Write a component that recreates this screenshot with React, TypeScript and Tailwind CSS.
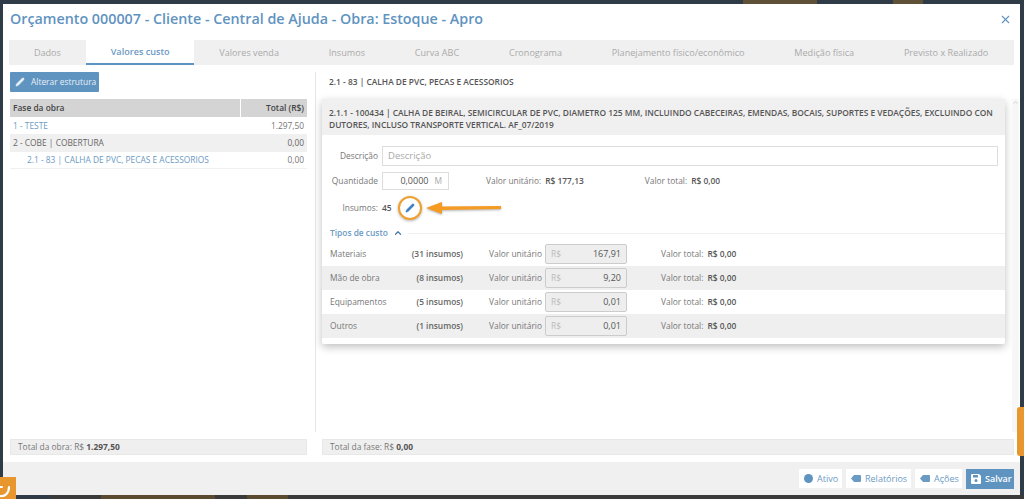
import { ChevronUp, Pencil, X } from 'lucide-react';

const tabs = ['Dados', 'Valores custo', 'Valores venda', 'Insumos', 'Curva ABC', 'Cronograma', 'Planejamento físico/econômico', 'Medição física', 'Previsto x Realizado'];

const costTypes = [
  { name: 'Materiais', count: '(31 insumos)', value: '167,91', shaded: false },
  { name: 'Mão de obra', count: '(8 insumos)', value: '9,20', shaded: true },
  { name: 'Equipamentos', count: '(5 insumos)', value: '0,01', shaded: false },
  { name: 'Outros', count: '(1 insumos)', value: '0,01', shaded: true },
];

function CostRow({ name, count, value, shaded }: Readonly<(typeof costTypes)[number]>) {
  return (
    <div className={`flex h-6 items-center pl-[8px] ${shaded ? 'bg-[#efefef]' : 'bg-white'}`}>
      <span className="w-[60px] text-[#777]">{name}</span>
      <span className="w-[73px] text-right font-semibold text-[#666]">{count}</span>
      <span className="ml-[26px] w-[56px] text-[#777]">Valor unitário</span>
      <div className="flex h-[20px] w-[82px] items-center justify-between rounded-[2px] border border-[#ccc] bg-[#eee] px-[5px]">
        <span className="text-[#bbb]">R$</span>
        <span className="text-[9px] text-[#555]">{value}</span>
      </div>
      <span className="ml-[34px] text-[#777]">Valor total:</span>
      <span className="ml-[4px] font-semibold text-[#555]">R$ 0,00</span>
    </div>
  );
}

function TagIcon() {
  return (
    <svg width="10" height="7" viewBox="0 0 10 7" fill="currentColor">
      <path d="M3 0H9a1 1 0 0 1 1 1V6a1 1 0 0 1-1 1H3L0 3.5Z" />
    </svg>
  );
}

function SaveIcon() {
  return (
    <svg width="10" height="10" viewBox="0 0 10 10">
      <path d="M1 0H8L10 2V9a1 1 0 0 1-1 1H1a1 1 0 0 1-1-1V1a1 1 0 0 1 1-1Z" fill="white" />
      <rect x="2" y="1" width="5" height="2.5" fill="#5f93c0" />
      <circle cx="5" cy="6.5" r="1.5" fill="#5f93c0" />
    </svg>
  );
}

export default function App() {
  return (
    <div className="relative h-[499px] w-[1024px] overflow-hidden bg-[#2f3b46] pb-[4px] pl-[3px] pr-[4px] pt-[4px] font-['Open_Sans',sans-serif] text-[8.4px] leading-[12px]">
      {/* what shows of the page behind the modal */}
      <div className="absolute left-[743px] top-0 h-[4px] w-[74px] bg-[#5f5038]" />
      <div className="absolute left-[893px] top-0 h-[4px] w-[30px] bg-[#5f5038]" />
      <div className="absolute bottom-0 left-[50px] h-[4px] w-[974px] bg-[#3a3a3a]" />
      <div className="absolute bottom-0 left-[101px] h-[4px] w-[114px] bg-[#5a4a30]" />
      <div className="absolute bottom-0 left-[247px] h-[4px] w-[41px] bg-[#5a4a30]" />

      <div className="relative flex h-full flex-col bg-white">
        <div className="flex h-[36px] shrink-0 items-start justify-between pl-[7px] pr-[8px] pt-[4px]">
          <h1 className="whitespace-nowrap text-[14.3px] font-semibold leading-[22px] text-[#5f93c0]">Orçamento 000007 - Cliente - Central de Ajuda - Obra: Estoque - Apro</h1>
          <X size={13} strokeWidth={2} className="mt-[5px] text-[#5f93c0]" />
        </div>

        <div className="ml-[6px] mr-[6px] flex h-[25px] shrink-0 bg-[#f0f0f0] text-[9.1px]">
          {tabs.map((tab, i) => (
            <div
              key={tab}
              className={`flex items-center whitespace-nowrap px-[24.9px] ${i === 1 ? 'border-b-[2px] border-[#5f93c0] bg-white font-semibold text-[#6b9ac4]' : 'text-[#aaa]'}`}
            >
              {tab}
            </div>
          ))}
        </div>

        <div className="flex min-h-0 flex-1 pt-[7px]">
          <div className="ml-[7px] flex w-[297px] shrink-0 flex-col">
            <button className="flex h-[20px] w-[89px] items-center gap-[6px] whitespace-nowrap rounded-[1px] bg-[#5f93c0] pl-[5px] text-[#e8f0f7]">
              <Pencil size={10} fill="currentColor" strokeWidth={1} />
              Alterar estrutura
            </button>
            <div className="mt-[7px] flex h-[18px] items-center bg-[#d4d4d4] font-semibold text-[#444]">
              <span className="w-[231px] border-r border-white pl-[3px] leading-[18px]">Fase da obra</span>
              <span className="flex-1 pr-[3px] text-right">Total (R$)</span>
            </div>
            <div className="flex h-[17px] items-center text-[#777]">
              <span className="flex-1 pl-[3px] text-[#6b9ac4]">1 - TESTE</span>
              <span className="pr-[3px]">1.297,50</span>
            </div>
            <div className="flex h-[18px] items-center bg-[#f0f0f0] text-[#666]">
              <span className="flex-1 pl-[3px]">2 - COBE | COBERTURA</span>
              <span className="pr-[3px]">0,00</span>
            </div>
            <div className="flex h-[17px] items-center border-b border-[#f0f0f0] text-[#777]">
              <span className="flex-1 pl-[17px] text-[#6b9ac4]">2.1 - 83 | CALHA DE PVC, PECAS E ACESSORIOS</span>
              <span className="pr-[3px]">0,00</span>
            </div>
          </div>

          <div className="ml-[8px] flex w-[1px] shrink-0 bg-[#e6e6e6]" />

          <div className="flex min-w-0 flex-1 flex-col pl-[6px]">
            <div className="flex h-[27px] shrink-0 items-start pl-[7px] pt-[4px] font-semibold text-[#555]">2.1 - 83 | CALHA DE PVC, PECAS E ACESSORIOS</div>
            <div className="flex min-h-0 flex-1">
              <div className="h-[245px] w-[683px] rounded-[2px] bg-white shadow-[0_3px_8px_rgba(0,0,0,0.25)]">
                <div className="h-[36px] bg-[#f0f0f0] pl-[7px] pr-[4px] pt-[8px] font-semibold text-[#555]">
                  <div className="whitespace-nowrap">2.1.1 - 100434 | CALHA DE BEIRAL, SEMICIRCULAR DE PVC, DIAMETRO 125 MM, INCLUINDO CABECEIRAS, EMENDAS, BOCAIS, SUPORTES E VEDAÇÕES, EXCLUINDO CON</div>
                  <div className="whitespace-nowrap">DUTORES, INCLUSO TRANSPORTE VERTICAL. AF_07/2019</div>
                </div>

                <div className="mt-[11px] flex items-center">
                  <span className="w-[56px] text-right text-[#777]">Descrição</span>
                  <div className="ml-[4px] flex h-[20px] w-[616px] items-center border border-[#ddd] pl-[5px] text-[9.5px] text-[#aaa]">Descrição</div>
                </div>

                <div className="mt-[6px] flex items-center">
                  <span className="w-[56px] text-right text-[#777]">Quantidade</span>
                  <div className="ml-[4px] flex h-[18px] w-[67px] items-center justify-end border border-[#ddd] pr-[6px]">
                    <span className="text-[9px] text-[#555]">0,0000</span>
                    <span className="ml-[6px] text-[#aaa]">M</span>
                  </div>
                  <span className="ml-[37px] text-[#777]">Valor unitário:</span>
                  <span className="ml-[4px] font-semibold text-[#555]">R$ 177,13</span>
                  <span className="ml-[61px] text-[#777]">Valor total:</span>
                  <span className="ml-[4px] font-semibold text-[#555]">R$ 0,00</span>
                </div>

                <div className="mt-[6px] flex h-[24px] items-center">
                  <span className="w-[56px] text-right text-[#777]">Insumos:</span>
                  <span className="ml-[4px] font-semibold text-[#555]">45</span>
                  <div className="ml-[6px] flex h-[24px] w-[24px] items-center justify-center rounded-full border-2 border-[#f0a030] bg-white shadow-[0_1px_3px_rgba(0,0,0,0.3)]">
                    <Pencil size={10} fill="currentColor" strokeWidth={1} className="text-[#3b7fc4]" />
                  </div>
                  <svg width="78" height="16" viewBox="0 0 78 16" className="ml-[3px] drop-shadow-[0_1px_1px_rgba(0,0,0,0.3)]">
                    <path d="M1 8 L17 2 L17 6.5 L76 6 L76 9 L17 10 L17 14 Z" fill="#f59a23" />
                  </svg>
                </div>

                <div className="mt-[7px] flex items-center pl-[8px]">
                  <span className="font-semibold text-[#6b9ac4]">Tipos de custo</span>
                  <ChevronUp size={10} strokeWidth={3} className="ml-[5px] text-[#4a7ba8]" />
                  <div className="ml-[5px] h-px flex-1 bg-[#eee]" />
                </div>

                <div className="mt-[3px]">
                  {costTypes.map(row => (
                    <CostRow key={row.name} {...row} />
                  ))}
                </div>
              </div>
              <div className="ml-[7px] w-[7px] bg-[#f7f7f7]">
                <ChevronUp size={7} className="text-[#bbb]" />
              </div>
            </div>
          </div>
        </div>

        <div className="mt-[7px] flex h-[16px] shrink-0 text-[#777]">
          <div className="ml-[7px] flex w-[297px] items-center border border-[#e8e8e8] bg-[#efefef] pl-[7px]">
            Total da obra: R$&nbsp;<span className="font-bold text-[#555]">1.297,50</span>
          </div>
          <div className="ml-[15px] flex w-[692px] items-center border border-[#e8e8e8] bg-[#efefef] pl-[7px]">
            Total da fase: R$&nbsp;<span className="font-bold text-[#555]">0,00</span>
          </div>
        </div>

        <div className="mt-[7px] flex h-[33px] shrink-0 items-center justify-end gap-[4px] bg-[#f0f0f0] pr-[6px] text-[9px] text-[#6b9ac4]">
          <div className="flex h-[19px] w-[43px] items-center gap-[4px] bg-white pl-[5px]">
            <span className="h-[9px] w-[9px] rounded-full bg-[#5f93c0]" />
            Ativo
          </div>
          <div className="flex h-[19px] w-[65px] items-center gap-[4px] bg-white pl-[5px]">
            <TagIcon />
            Relatórios
          </div>
          <div className="flex h-[19px] w-[47px] items-center gap-[4px] bg-white pl-[5px]">
            <TagIcon />
            Ações
          </div>
          <div className="flex h-[20px] w-[48px] items-center gap-[4px] bg-[#5f93c0] pl-[5px] font-semibold text-white">
            <SaveIcon />
            Salvar
          </div>
        </div>
      </div>

      <div className="absolute right-0 top-[407px] h-[49px] w-[7px] rounded-l-[3px] bg-[#e8962e]" />
      <div className="absolute bottom-0 left-0 h-[22px] w-[16px] bg-[#e8962e]">
        <svg width="16" height="22" viewBox="0 0 16 22" fill="none" stroke="white" strokeWidth="2.2" strokeLinecap="round">
          <path d="M0 10 H2" />
          <path d="M0 19 C5 20 9 16 9 10" />
        </svg>
      </div>
    </div>
  );
}
